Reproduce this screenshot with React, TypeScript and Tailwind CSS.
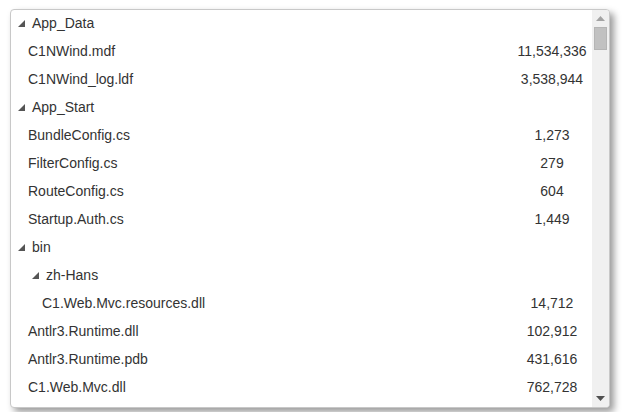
import React from "react";

type Row = { name: string; size?: string; level: number; folder?: boolean };

const rows: Row[] = [
  { name: "App_Data", level: 0, folder: true },
  { name: "C1NWind.mdf", size: "11,534,336", level: 1 },
  { name: "C1NWind_log.ldf", size: "3,538,944", level: 1 },
  { name: "App_Start", level: 0, folder: true },
  { name: "BundleConfig.cs", size: "1,273", level: 1 },
  { name: "FilterConfig.cs", size: "279", level: 1 },
  { name: "RouteConfig.cs", size: "604", level: 1 },
  { name: "Startup.Auth.cs", size: "1,449", level: 1 },
  { name: "bin", level: 0, folder: true },
  { name: "zh-Hans", level: 1, folder: true },
  { name: "C1.Web.Mvc.resources.dll", size: "14,712", level: 2 },
  { name: "Antlr3.Runtime.dll", size: "102,912", level: 1 },
  { name: "Antlr3.Runtime.pdb", size: "431,616", level: 1 },
  { name: "C1.Web.Mvc.dll", size: "762,728", level: 1 },
];

function Tri() {
  return (
    <svg width="7" height="7" viewBox="0 0 7 7" className="shrink-0">
      <polygon points="7,0 7,7 0,7" fill="#555" />
    </svg>
  );
}

export default function App() {
  return (
    <div
      className="w-[631px] h-[412px] bg-white pl-[10px] pt-[9px] overflow-hidden"
      style={{ fontFamily: '"Liberation Sans", Arial, sans-serif' }}
    >
      <div className="w-[600px] h-[399px] border border-[#c8c8c8] rounded-[4px] bg-white shadow-[4px_4px_7px_rgba(0,0,0,0.4)] flex overflow-hidden">
        <div className="flex-1 overflow-hidden -mt-[1px]">
          {rows.map((r, i) => {
            const leaf = !r.folder;
            let pad = 0;
            if (r.folder) pad = r.level === 0 ? 7 : 21;
            else pad = r.level === 1 ? 17 : 31;
            return (
              <div key={i} className="h-[28px] flex items-center text-[14px] text-[#333]">
                <div className="flex-1 flex items-center" style={{ paddingLeft: pad }}>
                  {r.folder && (
                    <span className="mr-[7px] flex items-center">
                      <Tri />
                    </span>
                  )}
                  <span>{r.name}</span>
                </div>
                {leaf && <div className="w-[80px] text-center">{r.size}</div>}
              </div>
            );
          })}
        </div>
        <div className="w-[17px] bg-[#f0f0f0] flex flex-col items-center">
          <div className="h-[17px] flex items-center justify-center">
            <svg width="9" height="5" viewBox="0 0 9 5">
              <polygon points="0,5 9,5 4.5,0" fill="#a3a3a3" />
            </svg>
          </div>
          <div className="w-[13px] h-[23px] bg-[#c1c1c1] border border-[#b5b5b5]" />
          <div className="flex-1" />
          <div className="h-[17px] flex items-center justify-center">
            <svg width="9" height="5" viewBox="0 0 9 5">
              <polygon points="0,0 9,0 4.5,5" fill="#505050" />
            </svg>
          </div>
        </div>
      </div>
    </div>
  );
}
